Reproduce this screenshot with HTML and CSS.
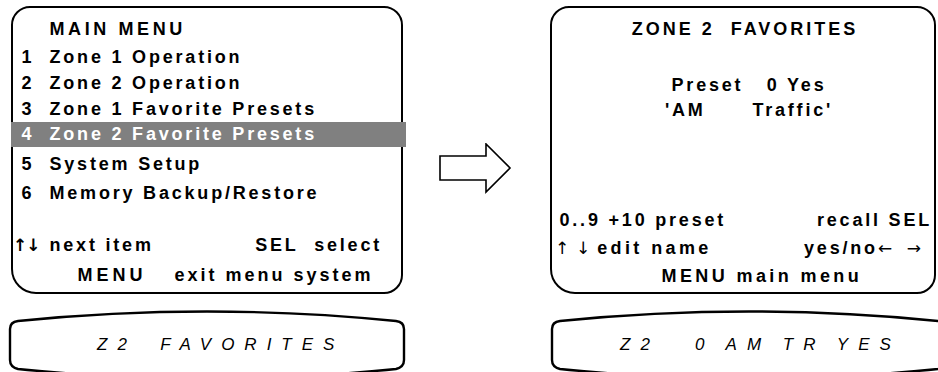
FILE: index.html
```html
<!DOCTYPE html>
<html lang="en">
<head>
    <meta charset="UTF-8">
    <title>Zone 2 Favorites menu</title>
    <link rel="stylesheet" href="styles.css">
</head>
<body>

    <div class="page">

        <!-- on-screen menu, before -->
        <div class="screen main-menu">
            <div class="title">MAIN MENU</div>
            <ul class="menu">
                <li><span class="num">1</span>Zone 1 Operation</li>
                <li><span class="num">2</span>Zone 2 Operation</li>
                <li><span class="num">3</span>Zone 1 Favorite Presets</li>
                <li class="sel"><span class="num">4</span>Zone 2 Favorite Presets</li>
                <li class="low first-low"><span class="num">5</span>System Setup</li>
                <li class="low"><span class="num">6</span>Memory Backup/Restore</li>
            </ul>
            <div class="hints">
                <div class="hint-row hint-keys">
                    <span><span class="arrows">↑↓</span>next item</span>
                    <span>SEL&nbsp; select</span>
                </div>
                <div class="hint-row hint-menu">
                    <span class="menu-key">MENU</span>
                    <span>exit menu system</span>
                </div>
            </div>
        </div>

        <div class="step-arrow">
            <svg width="74" height="52" viewBox="0 0 74 52">
                <polygon points="1,13 47,13 47,1 71,25 47,49 47,37 1,37" fill="#fff" stroke="#000" stroke-width="1.6"/>
            </svg>
        </div>

        <!-- on-screen menu, after -->
        <div class="screen favorites">
            <div class="title center">ZONE 2&nbsp; FAVORITES</div>
            <div class="preset">
                <div>Preset&nbsp;&nbsp; 0 Yes</div>
                <div>'AM&nbsp;&nbsp;&nbsp;&nbsp;&nbsp; Traffic'</div>
            </div>
            <div class="hints">
                <div class="fav-row fav-a">
                    <span>0..9 +10 preset</span>
                    <span>recall SEL</span>
                </div>
                <div class="fav-row fav-b">
                    <span><span class="thin-arrow">↑</span> <span class="thin-arrow">↓</span> <span class="wide">edit name</span></span>
                    <span>yes/no<span class="thin-arrow">←</span>&nbsp; <span class="thin-arrow">→</span></span>
                </div>
                <div class="fav-row fav-c">
                    <span class="wide">MENU main menu</span>
                </div>
            </div>
        </div>

        <!-- front panel display -->
        <div class="lcd">
            <svg class="lcd-frame" width="398" height="70" viewBox="0 0 398 70">
                <path d="M10,11 Q199,-8 388,11 Q396,12 396,19 L396,50 Q396,57 388,59 Q199,78 10,59 Q2,57 2,50 L2,19 Q2,12 10,11 Z" fill="none" stroke="#000" stroke-width="2.4"/>
            </svg>
            <div class="lcd-text lcd-left">Z2  FAVORITES</div>
        </div>

        <div></div>

        <div class="lcd">
            <svg class="lcd-frame" width="398" height="70" viewBox="0 0 398 70">
                <path d="M10,11 Q199,-8 388,11 Q396,12 396,19 L396,50 Q396,57 388,59 Q199,78 10,59 Q2,57 2,50 L2,19 Q2,12 10,11 Z" fill="none" stroke="#000" stroke-width="2.4"/>
            </svg>
            <div class="lcd-text lcd-right">Z2   0 AM TR YES</div>
        </div>

    </div>

</body>
</html>
```

FILE: styles.css
```css
* {
    box-sizing: border-box;
}
html, body {
    margin: 0;
}
body {
    width: 938px;
    height: 372px;
    overflow: hidden;
    background: #fff;
    color: #000;
    font-family: "Liberation Sans", Arial, sans-serif;
}
.page {
    display: grid;
    grid-template-columns: 398px 144px 388px;
    row-gap: 16px;
    padding: 6px 0 0 8px;
}

/* menu screens */
.screen {
    height: 288px;
    border: 2.5px solid #000;
    border-radius: 19px 19px 19px 25px;
    display: flex;
    flex-direction: column;
    padding-top: 6px;
    font-size: 18px;
    font-weight: bold;
    letter-spacing: 2.8px;
    white-space: nowrap;
}
.main-menu {
    margin: 0 3px;
}
.favorites {
    width: 386px;
}
.title {
    height: 30px;
    line-height: 30px;
    padding-left: 36.5px;
    letter-spacing: 3.6px;
}
.title.center {
    padding-left: 4px;
    text-align: center;
    letter-spacing: 3px;
}
.wide {
    letter-spacing: 3.4px;
}
.menu {
    list-style: none;
    margin: 0;
    padding: 0;
}
.menu li {
    display: flex;
    height: 26px;
    line-height: 26px;
    padding-left: 8.5px;
}
.num {
    width: 28px;
}
.menu .sel {
    height: 25px;
    line-height: 25px;
    margin: 0 -5px 0 -2.5px;
    padding-left: 11px;
    background: #808080;
    color: #fff;
}
.menu .low {
    height: 29px;
    line-height: 29px;
}
.menu .first-low {
    margin-top: 3px;
}
.hints {
    margin-top: auto;
    padding-bottom: 2.5px;
}
.hint-row {
    display: flex;
    height: 30px;
    line-height: 30px;
}
.hint-keys {
    justify-content: space-between;
    padding-right: 19px;
}
.arrows {
    display: inline-block;
    width: 36.5px;
    letter-spacing: -1px;
    font-family: "DejaVu Sans", sans-serif;
    font-size: 17px;
}
.hint-menu {
    padding-left: 64.5px;
    letter-spacing: 3px;
}
.menu-key {
    margin-right: 28px;
    letter-spacing: 4px;
}

/* zone 2 favorites screen */
.preset {
    margin-top: 29px;
    text-align: center;
    line-height: 25px;
    padding-left: 12px;
}
.fav-row {
    display: flex;
    justify-content: space-between;
    height: 28px;
    line-height: 28px;
}
.fav-a {
    padding: 0 2px 0 7.5px;
}
.fav-b {
    padding: 0 14px 0 3px;
}
.fav-c {
    padding-left: 109.5px;
}
.thin-arrow {
    font-family: "DejaVu Sans", sans-serif;
    font-weight: normal;
    font-size: 17px;
    letter-spacing: -1px;
}

.step-arrow {
    margin: 137px 0 0 33px;
}

/* front panel display */
.lcd {
    position: relative;
    height: 70px;
}
.lcd-frame {
    position: absolute;
    left: 0;
    top: 0;
}
.lcd-text {
    position: relative;
    line-height: 70px;
    font-size: 17px;
    font-style: italic;
    letter-spacing: 10px;
    word-spacing: -3px;
    white-space: pre;
}
.lcd-left {
    padding-left: 89px;
}
.lcd-right {
    padding-left: 70px;
}
```
